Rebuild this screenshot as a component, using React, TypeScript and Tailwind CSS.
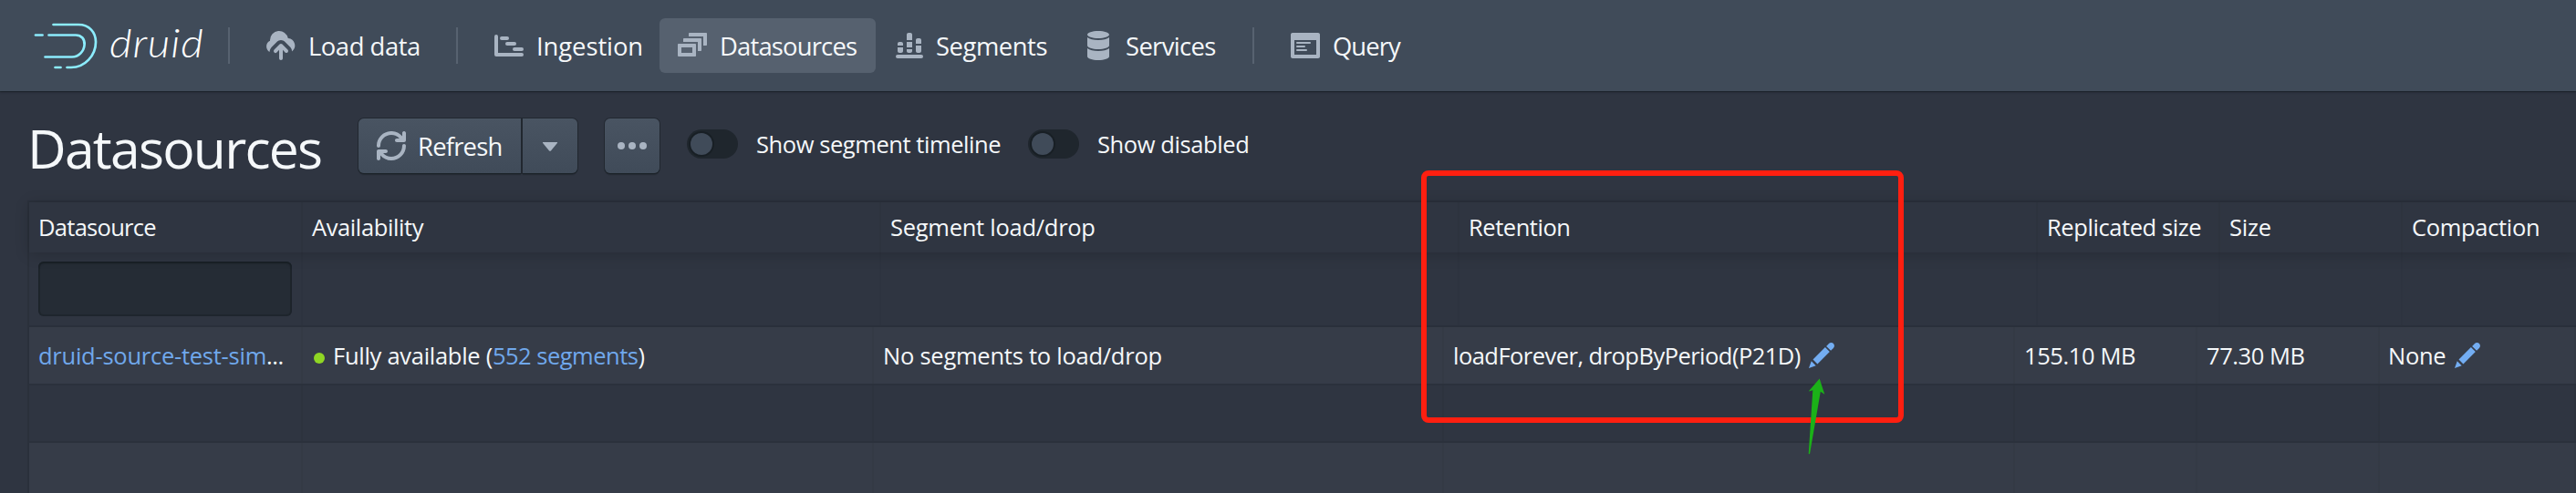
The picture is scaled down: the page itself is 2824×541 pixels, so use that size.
import React from "react";
import type { ReactNode } from "react";

function Icon({ children, className = "text-[#a9b4c2]" }: { children: ReactNode; className?: string }) {
  return (
    <svg width="32" height="32" viewBox="0 0 16 16" fill="currentColor" className={"shrink-0 " + className}>
      {children}
    </svg>
  );
}

const CloudUpload = () => (
  <Icon>
    <path d="M8.71 7.29C8.53 7.11 8.28 7 8 7s-.53.11-.71.29l-3 3a1.003 1.003 0 001.42 1.42L7 10.41V15c0 .55.45 1 1 1s1-.45 1-1v-4.59l1.29 1.29c.18.19.43.3.71.3a1.003 1.003 0 00.71-1.71l-3-3z" />
    <path d="M12 4c-.03 0-.07 0-.1.01A5 5 0 002 5c0 .11.01.22.02.33A3.495 3.495 0 00.03 8.5c0 1.29.7 2.41 1.74 3.02.05-.97.42-1.87 1.1-2.6l3-3c.55-.55 1.3-.92 2.13-.92s1.58.37 2.12.91l3 3c.56.56.88 1.34.88 2.13 0 .06-.01.11-.01.16A4 4 0 0012 4z" />
  </Icon>
);

const Gantt = () => (
  <Icon>
    <path d="M0 3a1 1 0 012 0v9h13a1 1 0 010 2H1a1 1 0 01-1-1V3z" />
    <rect x="3" y="3" width="5" height="2" rx="1" />
    <rect x="6" y="6" width="6" height="2" rx="1" />
    <rect x="10" y="9" width="6" height="2" rx="1" />
  </Icon>
);

const MultiSelect = () => (
  <Icon>
    <path
      fillRule="evenodd"
      d="M.5 7h9c.28 0 .5.22.5.5v6c0 .28-.22.5-.5.5h-9a.5.5 0 01-.5-.5v-6C0 7.22.22 7 .5 7zM2 9v3h6V9H2z"
    />
    <path d="M3 4.5c0-.28.22-.5.5-.5h9c.28 0 .5.22.5.5v6c0 .28-.22.5-.5.5H11V6H3V4.500z" />
    <path d="M6 1.5c0-.28.22-.5.5-.5h9c.28 0 .5.22.5.5v6c0 .28-.22.5-.5.5H14V3H6V1.500z" />
  </Icon>
);

const StackedChart = () => (
  <Icon>
    <rect x="1" y="13" width="15" height="2" rx="1" />
    <path d="M2 8V7c0-.55.45-1 1-1h1c.55 0 1 .45 1 1v1H2zM2 9h3v2c0 .55-.45 1-1 1H3c-.55 0-1-.45-1-1V9z" />
    <path d="M7 5V2c0-.55.45-1 1-1h1c.55 0 1 .45 1 1v3H7zM7 6h3v3H7zM7 10h3v1c0 .55-.45 1-1 1H8c-.55 0-1-.45-1-1v-1z" />
    <path d="M12 7V5c0-.55.45-1 1-1h1c.55 0 1 .45 1 1v2h-3zM12 8h3v3c0 .55-.45 1-1 1h-1c-.55 0-1-.45-1-1V8z" />
  </Icon>
);

const Database = () => (
  <Icon>
    <path d="M8 4c3.31 0 6-.9 6-2s-2.69-2-6-2C4.68 0 2 .9 2 2s2.68 2 6 2zm-6-.48V8c0 1.1 2.69 2 6 2s6-.9 6-2V3.52C12.78 4.4 10.56 5 8 5s-4.78-.6-6-1.48zm0 6V14c0 1.1 2.69 2 6 2s6-.9 6-2V9.52C12.78 10.4 10.56 11 8 11s-4.78-.6-6-1.48z" />
  </Icon>
);

const Application = () => (
  <Icon>
    <path
      fillRule="evenodd"
      d="M1 1h14c.55 0 1 .45 1 1v12c0 .55-.45 1-1 1H1c-.55 0-1-.45-1-1V2c0-.55.45-1 1-1zm1 4v8h12V5H2z"
    />
    <rect x="3" y="6" width="8" height="1" rx=".5" />
    <rect x="3" y="8" width="5" height="1" rx=".5" />
    <rect x="3" y="10" width="6" height="1" rx=".5" />
  </Icon>
);

const RefreshIcon = () => (
  <Icon>
    <path d="M14.99 6.99c-.55 0-1 .45-1 1 0 3.31-2.69 6-6 6-1.77 0-3.36-.78-4.46-2h1.46c.55 0 1-.45 1-1s-.45-1-1-1h-4c-.55 0-1 .45-1 1v4c0 .55.45 1 1 1s1-.45 1-1v-1.74a7.95 7.95 0 006 2.74c4.42 0 8-3.58 8-8 0-.55-.45-1-1-1zm0-7c-.55 0-1 .45-1 1v1.74a7.95 7.95 0 00-6-2.74c-4.42 0-8 3.58-8 8 0 .55.45 1 1 1s1-.45 1-1c0-3.31 2.69-6 6-6 1.77 0 3.36.78 4.46 2h-1.46c-.55 0-1 .45-1 1s.45 1 1 1h4c.55 0 1-.45 1-1v-4c0-.55-.45-1-1-1z" />
  </Icon>
);

const CaretDown = () => (
  <Icon>
    <path d="M4.2 6h7.6c.25.02.3.25.15.45l-3.500 4.250c-.25.3-.65.3-.9 0l-3.500-4.250C3.900 6.250 3.950 6.020 4.200 6z" />
  </Icon>
);

const More = () => (
  <Icon>
    <circle cx="2" cy="8" r="2" />
    <circle cx="8" cy="8" r="2" />
    <circle cx="14" cy="8" r="2" />
  </Icon>
);

const Pencil = () => (
  <Icon className="text-[#73adf2]">
    <path d="M3.25 10.26l2.47 2.47 6.69-6.69-2.46-2.48-6.7 6.7zM.99 14.99l3.86-1.39-2.46-2.44L.99 15zm12.25-14c-.48 0-.92.2-1.24.51l-1.44 1.44 2.47 2.47 1.44-1.44c.32-.32.51-.75.51-1.24.01-.95-.77-1.74-1.74-1.74z" />
  </Icon>
);

function Logo() {
  return (
    <div className="flex w-[230px] shrink-0 items-center pl-9">
      <svg width="72" height="56" viewBox="36 22 72 56" fill="none" stroke="#8cecfd" strokeWidth="2.7" strokeLinecap="round" className="shrink-0">
        <path d="M58.5 27H86c12 0 19 8.500 19 19 0 15-12 28-27 28h-4.500" />
        <path d="M60.500 74h6" />
        <path d="M53.500 38.500H83c6.500 0 10 4.500 9.600 10.500-.5 7-6 13.500-13.600 13.500H49.500" />
        <path d="M39 38.500h7.500" />
      </svg>
      <span className="-mt-2 ml-3 origin-left scale-x-[1.08] font-['Lato',sans-serif] text-[44px] leading-[56px] font-light tracking-[0.8px] text-white italic">
        druid
      </span>
    </div>
  );
}

function NavButton({ icon, label, className }: { icon: ReactNode; label: string; className: string }) {
  return (
    <button className={"flex h-[60px] shrink-0 items-center gap-3.5 rounded-md pl-5 text-[27.4px] whitespace-nowrap " + className}>
      {icon}
      <span className="mt-0.5">{label}</span>
    </button>
  );
}

const Divider = ({ className }: { className: string }) => (
  <div className={"h-10 w-0.5 shrink-0 bg-[#576270] " + className} />
);

function Toggle({ label, className, text }: { label: string; className: string; text: string }) {
  return (
    <label className={"-mt-1 flex shrink-0 items-center " + className}>
      <span className="flex h-8 w-14 items-center rounded-full bg-[#1f262d] pl-1">
        <span className="size-6 rounded-full bg-[#404b59] shadow-[0_0_0_2px_rgba(16,22,26,0.4)]" />
      </span>
      <span className={"ml-5 text-[25.5px] whitespace-nowrap " + text}>{label}</span>
    </label>
  );
}

const button =
  "flex h-[60px] items-center bg-linear-to-b from-[#495462] to-[#404b59] shadow-[0_0_0_1px_rgba(16,22,26,0.4),0_2px_1px_rgba(16,22,26,0.35)]";

const headers = [
  { label: "Datasource", className: "w-[300px] tracking-[-0.71px]" },
  { label: "Availability", className: "w-[634px] tracking-[-0.4px]" },
  { label: "Segment load/drop", className: "w-[634px] tracking-[-0.27px]" },
  { label: "Retention", className: "w-[634px] tracking-[-0.45px]" },
  { label: "Replicated size", className: "w-[200px] tracking-[-0.42px]" },
  { label: "Size", className: "w-[200px] tracking-[-0.23px]" },
  { label: "Compaction", className: "w-[200px] tracking-[-0.32px]" },
];

const widths = ["w-[300px]", "w-[626px]", "w-[625px]", "w-[626px]", "w-[200px]", "w-[200px]", "w-[215px]"];

function Row({ cells, className }: { cells: ReactNode[]; className: string }) {
  return (
    <div className={"flex " + className}>
      {widths.map((w, i) => (
        <div key={i} className={"flex shrink-0 items-center border-r-2 border-black/[0.03] pl-2.5 whitespace-nowrap " + w}>
          {cells[i]}
        </div>
      ))}
    </div>
  );
}

const link = "text-[#70a8ec]";

export default function App() {
  return (
    <div className="relative h-[541px] w-[2824px] overflow-hidden bg-[#2f3541] font-['Open_Sans','Noto_Sans',sans-serif] text-[#f5f8fa]">
      <header className="relative flex h-[100px] items-center bg-[#404b59] shadow-[0_0_0_1px_rgba(16,22,26,0.25),0_1px_2px_rgba(16,22,26,0.6)]">
        <Logo />
        <Divider className="mr-5 ml-5" />
        <NavButton icon={<CloudUpload />} label="Load data" className="w-[208px] tracking-[-0.45px]" />
        <Divider className="mr-5 ml-5" />
        <NavButton icon={<Gantt />} label="Ingestion" className="w-[201px] tracking-[-0.07px]" />
        <NavButton icon={<MultiSelect />} label="Datasources" className="w-[237px] bg-[#56616f] tracking-[-0.81px]" />
        <NavButton icon={<StackedChart />} label="Segments" className="w-[208px] tracking-[-0.45px]" />
        <NavButton icon={<Database />} label="Services" className="w-[186px] tracking-[-0.64px]" />
        <Divider className="mr-5 ml-[19px]" />
        <NavButton icon={<Application />} label="Query" className="w-[162px] tracking-[-0.95px]" />
      </header>

      <div className="flex h-[120px] items-center pl-[30px]">
        <h1 className="mt-1 w-[363px] shrink-0 text-[58.8px] leading-[80px] tracking-[-1.75px]">Datasources</h1>
        <div className="flex shrink-0 gap-0.5">
          <button className={"w-[178px] gap-[13px] rounded-l-md pl-5 text-[27.4px] tracking-[-0.78px] " + button}>
            <RefreshIcon />
            <span className="mt-0.5">Refresh</span>
          </button>
          <button className={"w-[60px] justify-center rounded-r-md " + button}>
            <CaretDown />
          </button>
        </div>
        <button className={"ml-[30px] w-[60px] shrink-0 justify-center rounded-md " + button}>
          <More />
        </button>
        <Toggle label="Show segment timeline" className="ml-[30px] w-[374px]" text="tracking-[-0.43px]" />
        <Toggle label="Show disabled" className="" text="tracking-[-0.4px]" />
      </div>

      <main className="ml-[30px] h-[330px] border-t-2 border-l-2 border-[#2a303b] text-[25.5px]">
        <div className="relative flex h-[55px] shadow-[0_2px_15px_rgba(0,0,0,0.18)]">
          {headers.map((h) => (
            <div
              key={h.label}
              className={"flex shrink-0 items-center border-r-2 border-[#2d333e] bg-[#2f3541] pl-2.5 whitespace-nowrap " + h.className}
            >
              {h.label}
            </div>
          ))}
        </div>
        <div className="flex h-[82px] border-b-2 border-[#2a303b]">
          {headers.map((h, i) => (
            <div key={h.label} className={"flex shrink-0 items-center border-r-2 border-black/[0.025] pl-2.5 " + h.className}>
              {i === 0 && (
                <input className="h-[60px] w-[278px] rounded-md bg-[#252c35] shadow-[inset_0_0_0_2px_rgba(16,22,26,0.3),inset_0_2px_2px_rgba(16,22,26,0.4)]" />
              )}
            </div>
          ))}
        </div>
        <Row
          className="h-16 border-b-2 border-[#2b313c] bg-[#363c48]"
          cells={[
            <span className={"tracking-[-0.25px] " + link}>
              druid-source-test-sim<span className="tracking-[-0.5px] text-[#f5f8fa]">...</span>
            </span>,
            <>
              <span className="mt-[5px] mr-[9px] ml-0.5 size-3 rounded-full bg-[#8fd624]" />
              <span className="tracking-[-0.28px]">
                Fully available (<span className={"tracking-[-0.5px] " + link}>552 segments</span>)
              </span>
            </>,
            <span className="tracking-[-0.25px]">No segments to load/drop</span>,
            <>
              <span className="w-[388px] tracking-[-0.53px]">loadForever, dropByPeriod(P21D)</span>
              <Pencil />
            </>,
            <span className="tracking-[-0.4px]">155.10 MB</span>,
            <span className="tracking-[-0.45px]">77.30 MB</span>,
            <>
              <span className="-ml-px w-[71px] tracking-[-0.3px]">None</span>
              <Pencil />
            </>,
          ]}
        />
        <Row className="h-[63px] border-b-2 border-[#2b313c]" cells={[]} />
        <Row className="h-16 bg-[#363c48]" cells={[]} />
      </main>

      <div className="absolute top-[187px] left-[1558px] h-[277px] w-[529px] rounded-lg border-[6.5px] border-[#ff1f10]" />
      <svg className="absolute top-[412px] left-[1978px]" width="28" height="90" viewBox="1978 412 28 90">
        <path d="M1994.700 415.500L2000.300 432.700 1995.800 429.700 1984 498.200 1982.700 498 1987.300 428.300 1982.700 429.500z" fill="#1bb118" />
      </svg>
    </div>
  );
}
